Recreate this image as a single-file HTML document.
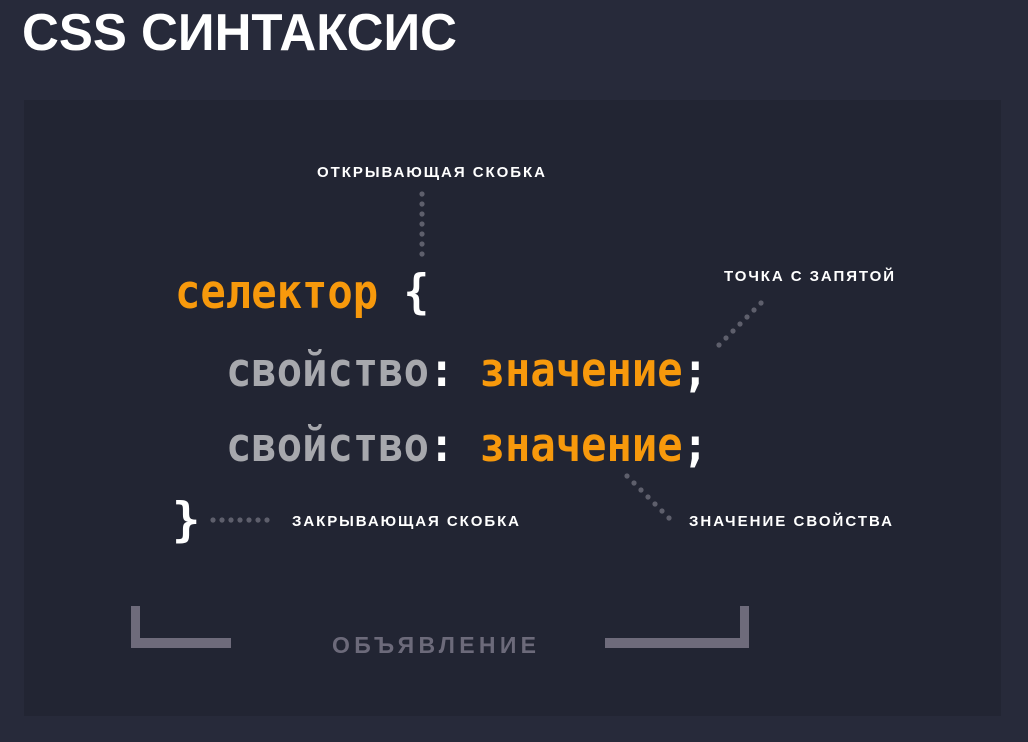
<!DOCTYPE html>
<html><head><meta charset="utf-8"><style>
html,body{margin:0;padding:0;background:#272a3a;width:1028px;height:742px;overflow:hidden}
svg{display:block}
.c{font-family:"DejaVu Sans Mono","Liberation Mono",monospace;font-weight:bold;font-size:47px}
.l{font-family:"Liberation Sans","DejaVu Sans",sans-serif;font-weight:bold;font-size:15px;fill:#fff}
</style></head><body>
<svg width="1028" height="742" viewBox="0 0 1028 742" xmlns="http://www.w3.org/2000/svg">
<rect width="1028" height="742" fill="#272a3a"/>
<text x="22" y="50" font-family="Liberation Sans, DejaVu Sans, sans-serif" font-weight="bold" font-size="52" fill="#fff" textLength="435" lengthAdjust="spacingAndGlyphs">CSS СИНТАКСИС</text>
<rect x="24" y="100" width="977" height="616" fill="#222533"/>

<text class="l" x="317" y="177" textLength="228" lengthAdjust="spacing">ОТКРЫВАЮЩАЯ СКОБКА</text>
<text class="l" x="724" y="281" textLength="170" lengthAdjust="spacing">ТОЧКА С ЗАПЯТОЙ</text>
<text class="l" x="292" y="526" textLength="227" lengthAdjust="spacing">ЗАКРЫВАЮЩАЯ СКОБКА</text>
<text class="l" x="689" y="526" textLength="203" lengthAdjust="spacing">ЗНАЧЕНИЕ СВОЙСТВА</text>

<g fill="#5e5f6c">
<circle cx="422" cy="194" r="2.6"/><circle cx="422" cy="204" r="2.6"/><circle cx="422" cy="214" r="2.6"/><circle cx="422" cy="224" r="2.6"/><circle cx="422" cy="234" r="2.6"/><circle cx="422" cy="244" r="2.6"/><circle cx="422" cy="254" r="2.6"/>
<circle cx="761" cy="303" r="2.6"/><circle cx="754" cy="310" r="2.6"/><circle cx="747" cy="317" r="2.6"/><circle cx="740" cy="324" r="2.6"/><circle cx="733" cy="331" r="2.6"/><circle cx="726" cy="338" r="2.6"/><circle cx="719" cy="345" r="2.6"/>
<circle cx="213" cy="520" r="2.6"/><circle cx="222" cy="520" r="2.6"/><circle cx="231" cy="520" r="2.6"/><circle cx="240" cy="520" r="2.6"/><circle cx="249" cy="520" r="2.6"/><circle cx="258" cy="520" r="2.6"/><circle cx="267" cy="520" r="2.6"/>
<circle cx="627" cy="476" r="2.6"/><circle cx="634" cy="483" r="2.6"/><circle cx="641" cy="490" r="2.6"/><circle cx="648" cy="497" r="2.6"/><circle cx="655" cy="504" r="2.6"/><circle cx="662" cy="511" r="2.6"/><circle cx="669" cy="518" r="2.6"/>
</g>

<text class="c" x="175" y="308" textLength="254" lengthAdjust="spacingAndGlyphs"><tspan fill="#f7990c">селектор</tspan><tspan fill="#fff"> {</tspan></text>
<text class="c" x="226" y="386" textLength="482" lengthAdjust="spacingAndGlyphs"><tspan fill="#a7a8ad">свойство</tspan><tspan fill="#fff">: </tspan><tspan fill="#f7990c">значение</tspan><tspan fill="#fff">;</tspan></text>
<text class="c" x="226" y="461" textLength="482" lengthAdjust="spacingAndGlyphs"><tspan fill="#a7a8ad">свойство</tspan><tspan fill="#fff">: </tspan><tspan fill="#f7990c">значение</tspan><tspan fill="#fff">;</tspan></text>
<text class="c" x="172" y="536" fill="#fff" font-size="52">}</text>

<g fill="#6e6b7b">
<rect x="131" y="606" width="9" height="42"/><rect x="131" y="638" width="100" height="10"/>
<rect x="740" y="606" width="9" height="42"/><rect x="605" y="638" width="144" height="10"/>
</g>
<text x="332" y="653" font-family="Liberation Sans, DejaVu Sans, sans-serif" font-weight="bold" font-size="23" fill="#6c6a7a" textLength="204" lengthAdjust="spacing">ОБЪЯВЛЕНИЕ</text>
</svg>
</body></html>
